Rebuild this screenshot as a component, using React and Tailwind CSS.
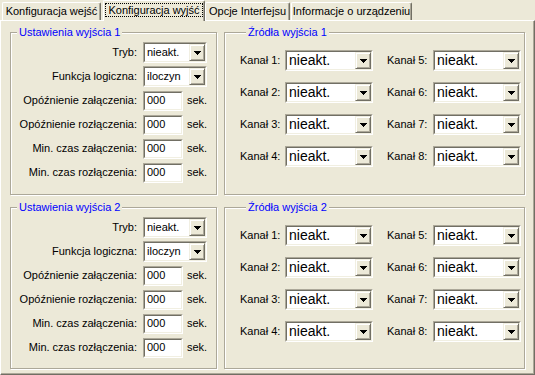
const ARROW_ROWS = [7, 5, 3, 1];

const SETTINGS = [
  { label: 'Tryb:', combo: 'nieakt.' },
  { label: 'Funkcja logiczna:', combo: 'iloczyn' },
  { label: 'Opóźnienie załączenia:' },
  { label: 'Opóźnienie rozłączenia:' },
  { label: 'Min. czas załączenia:' },
  { label: 'Min. czas rozłączenia:' },
];

function Arrow() {
  return (
    <svg width="7" height="4" viewBox="0 0 7 4" shapeRendering="crispEdges">
      {ARROW_ROWS.map((w, i) => (
        <rect key={i} x={(7 - w) / 2} y={i} width={w} height="1" fill="#000" />
      ))}
    </svg>
  );
}

function Sunken({ className, children }) {
  return (
    <div className={`flex border border-t-[#aca899] border-l-[#aca899] border-r-white border-b-white ${className}`}>
      <div className="flex min-w-0 flex-1 border border-t-[#716f64] border-l-[#716f64] border-r-[#f1efe2] border-b-[#f1efe2] bg-white">
        {children}
      </div>
    </div>
  );
}

function Combo({ value, className, textClass = 'text-[11px]' }) {
  return (
    <Sunken className={`h-[21px] ${className}`}>
      <span className={`flex-1 pl-[2px] leading-[17px] ${textClass}`}>{value}</span>
      <div className="flex w-[16px] items-center justify-center border border-t-[#f1efe2] border-l-[#f1efe2] border-r-[#716f64] border-b-[#716f64] bg-[#ece9d8] shadow-[inset_1px_1px_0_#fff,inset_-1px_-1px_0_#aca899]">
        <Arrow />
      </div>
    </Sunken>
  );
}

function Group({ title, className, children }) {
  return (
    <fieldset className={`min-w-0 border border-[#aca899] shadow-[inset_1px_1px_0_#fff,1px_1px_0_#fff] ${className}`}>
      <legend className="ml-[6px] bg-[#ece9d8] px-[2px] leading-[13px] text-[#0000ff]">{title}</legend>
      {children}
    </fieldset>
  );
}

function Settings({ n }) {
  return (
    <Group title={`Ustawienia wyjścia ${n}`} className="flex flex-col gap-[3px] pt-[3px]">
      {SETTINGS.map((row) => (
        <div key={row.label} className="flex h-[21px] items-center">
          <span className="w-[126px] text-right">{row.label}</span>
          {row.combo ? (
            <Combo value={row.combo} className="ml-[6px] w-[64px]" />
          ) : (
            <>
              <Sunken className="ml-[6px] h-[20px] w-[40px]">
                <span className="pl-[2px] leading-[14px]">000</span>
              </Sunken>
              <span className="ml-[4px]">sek.</span>
            </>
          )}
        </div>
      ))}
    </Group>
  );
}

function Sources({ n }) {
  return (
    <Group title={`Źródła wyjścia ${n}`} className="flex flex-col gap-[11px] pl-[15px] pt-[11px]">
      {[1, 2, 3, 4].map((k) => (
        <div key={k} className="flex h-[21px] items-center">
          <span className="w-[45px]">Kanał {k}:</span>
          <Combo value="nieakt." className="w-[88px]" textClass="text-[14px]" />
          <span className="ml-[14px] w-[46px]">Kanał {k + 4}:</span>
          <Combo value="nieakt." className="w-[88px]" textClass="text-[14px]" />
        </div>
      ))}
    </Group>
  );
}

function Tab({ className, children }) {
  return (
    <div className={`flex h-[18px] items-center justify-center rounded-t-[2px] border-t border-l border-r border-t-white border-l-white border-r-[#716f64] shadow-[inset_-1px_0_0_#aca899] ${className}`}>
      {children}
    </div>
  );
}

export default function App() {
  return (
    <div className="flex h-[375px] w-[535px] flex-col bg-[#ece9d8] font-['Liberation_Sans',Arial,sans-serif] text-[11px] text-black">
      <div className="flex h-[20px] items-end pl-[2px]">
        <Tab className="w-[99px]">Konfiguracja wejść</Tab>
        <div className="relative z-10 -mb-px ml-[2px] flex h-[21px] w-[102px] items-start justify-center rounded-t-[2px] border-t border-l border-r border-t-white border-l-white border-r-[#716f64] bg-[#ece9d8] pt-[2px] shadow-[inset_-1px_0_0_#aca899]">
          <span className="border border-dotted border-black px-[2px] leading-[12px]">Konfiguracja wyjść</span>
        </div>
        <Tab className="w-[85px]">Opcje Interfejsu</Tab>
        <Tab className="ml-[1px] w-[121px]">Informacje o urządzeniu</Tab>
      </div>
      <div className="grid flex-1 grid-cols-[207px_301px] grid-rows-[169px_168px] gap-x-[7px] gap-y-[6px] border border-t-white border-l-white border-r-[#716f64] border-b-[#716f64] pl-[9px] pt-[5px] shadow-[inset_-1px_-1px_0_#aca899]">
        <Settings n={1} />
        <Sources n={1} />
        <Settings n={2} />
        <Sources n={2} />
      </div>
    </div>
  );
}
